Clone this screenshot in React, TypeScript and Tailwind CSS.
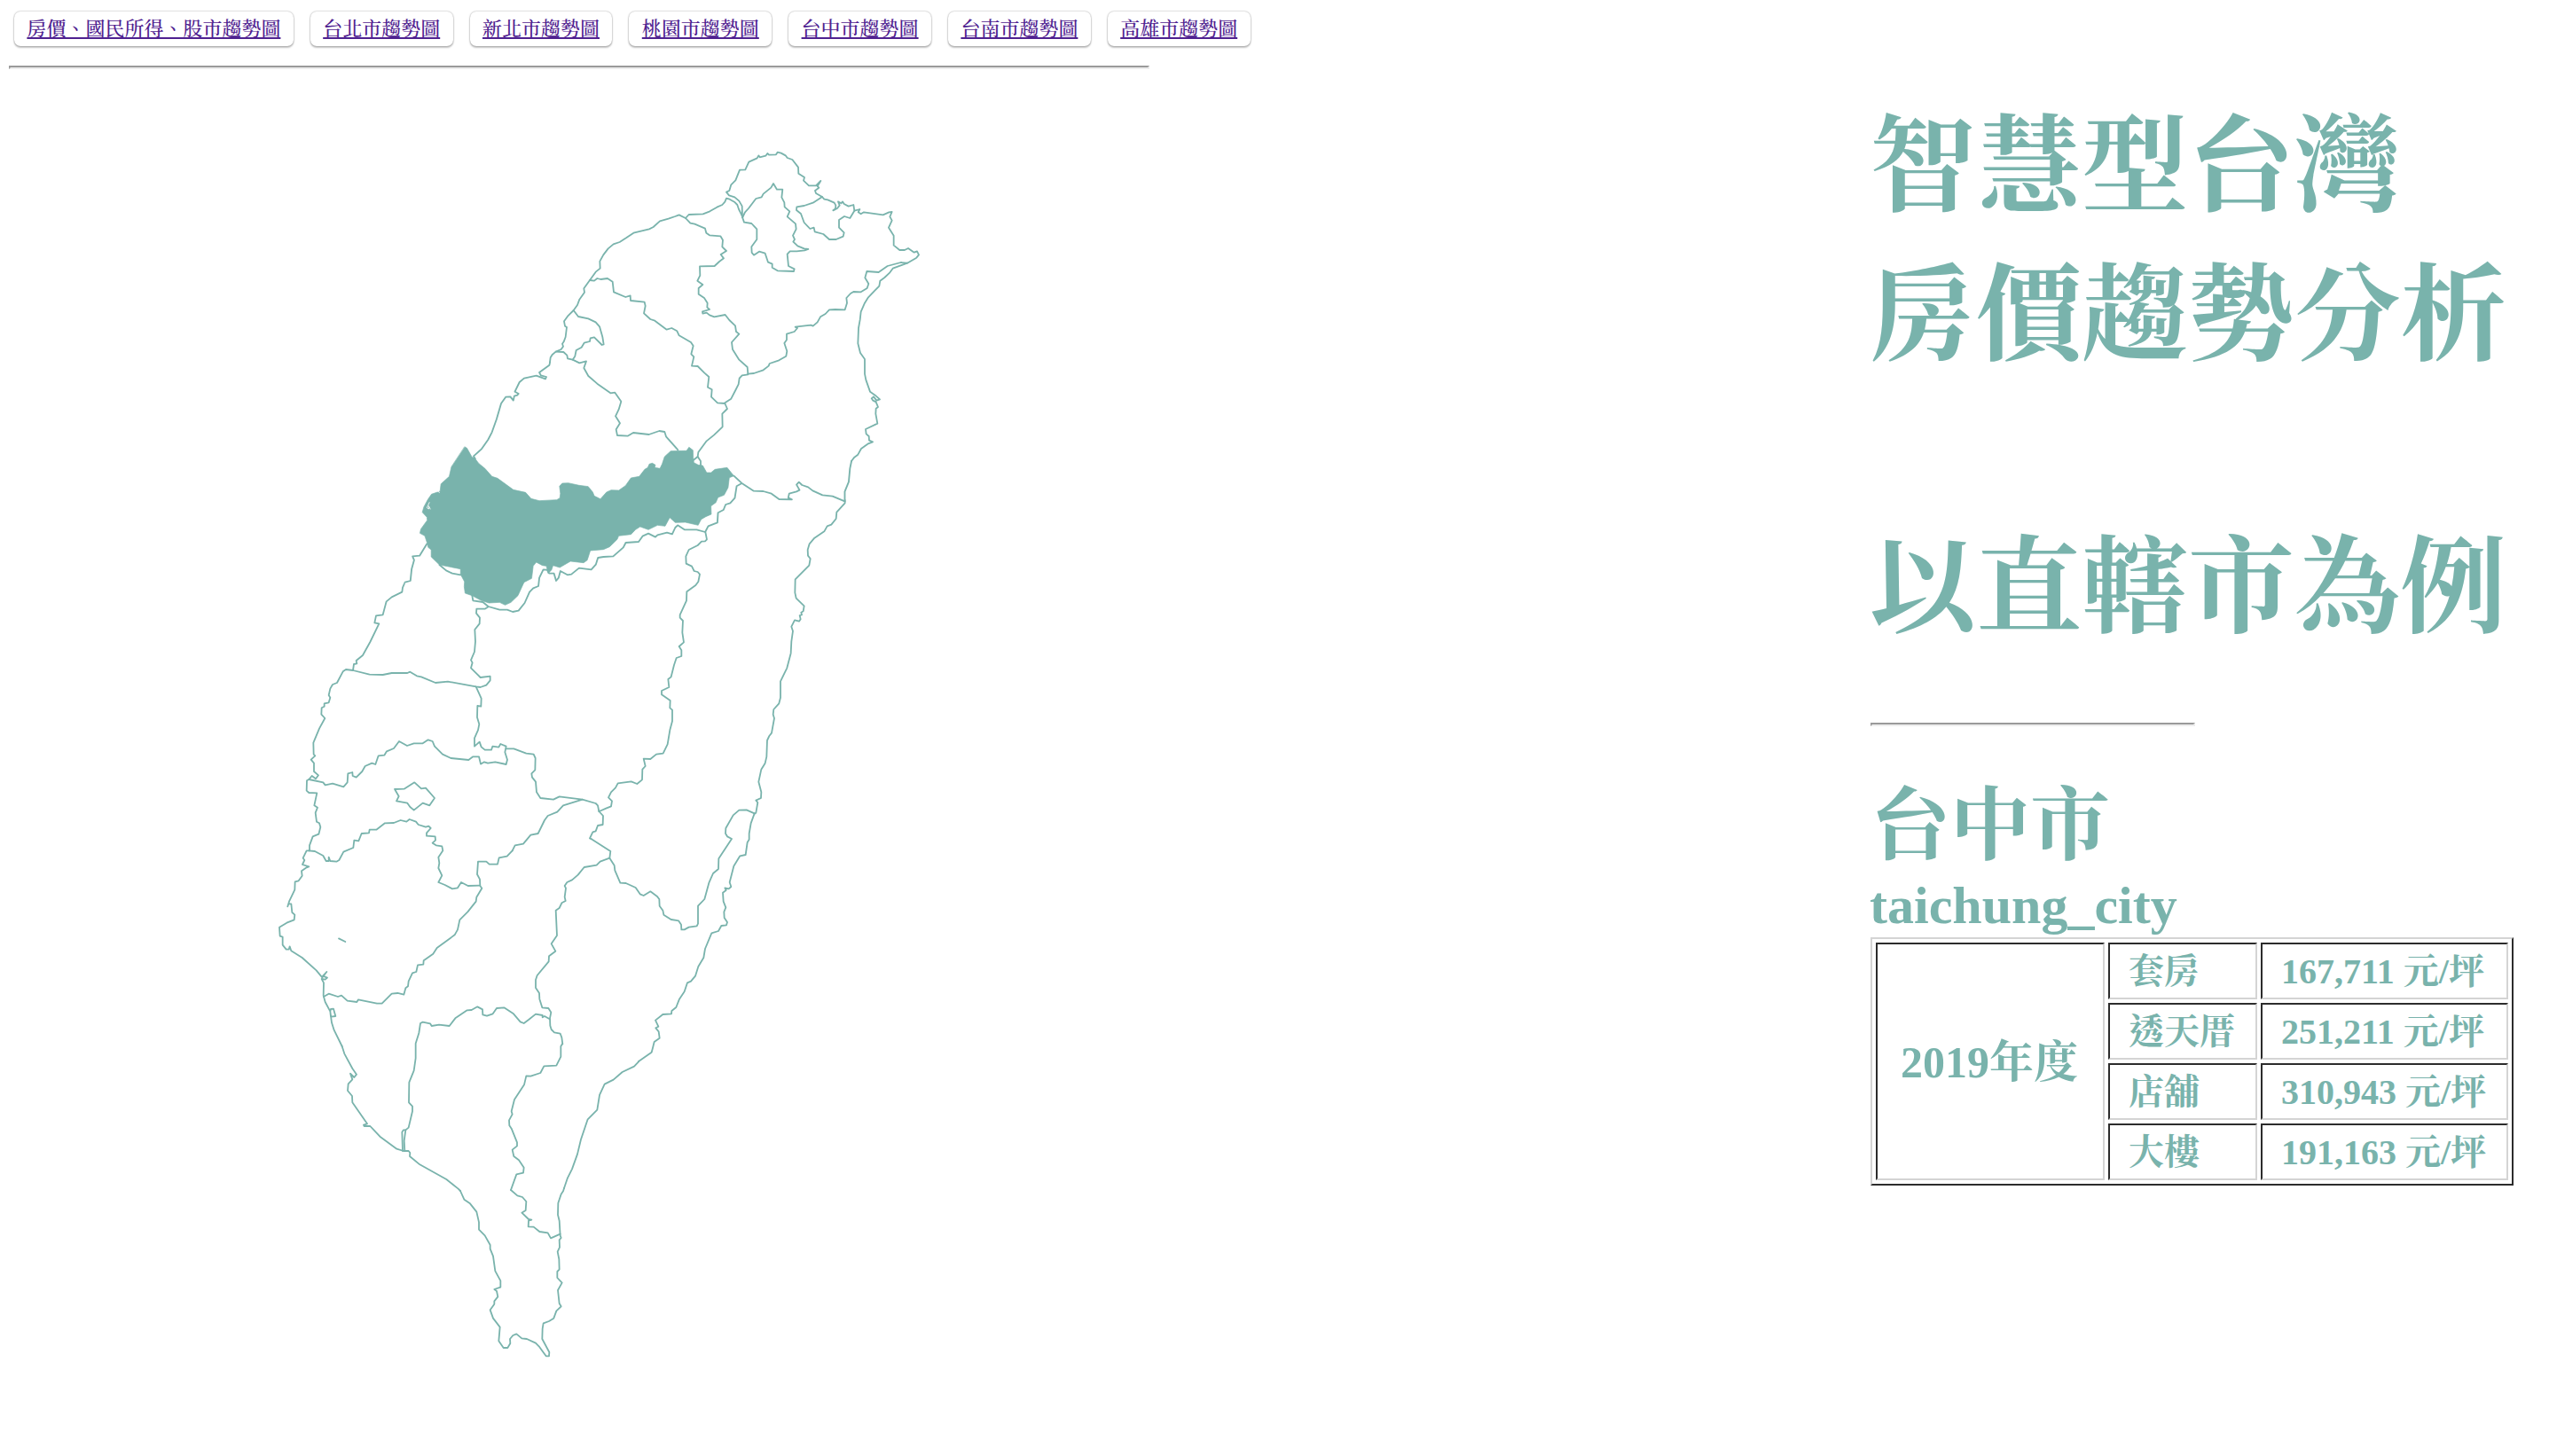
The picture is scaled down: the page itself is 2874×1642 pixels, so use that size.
const navLinks = [
  '房價、國民所得、股市趨勢圖',
  '台北市趨勢圖',
  '新北市趨勢圖',
  '桃園市趨勢圖',
  '台中市趨勢圖',
  '台南市趨勢圖',
  '高雄市趨勢圖',
];

const prices = [
  { type: '套房', price: '167,711 元/坪' },
  { type: '透天厝', price: '251,211 元/坪' },
  { type: '店舖', price: '310,943 元/坪' },
  { type: '大樓', price: '191,163 元/坪' },
];

type Sheet = { transform: string; lines: string[] };

// County boundaries, grouped by map sheet; each sheet has its own origin and scale.
const sheets: Sheet[] = [
  {
    transform: 'translate(620 150) scale(0.33333)',
    lines: [
      '652,285 646,272 639,258 634,243 624,233 608,224 597,221 592,233 583,243 565,251 541,265 518,274 470,276 459,288 437,277 424,282 401,290 372,298 350,318 336,325 283,338 258,355 236,369 215,376 197,391 181,412 169,434 170,458 155,470 135,498 115,526 117,539 100,563 93,582 80,600 60,620 48,637 51,653 57,657 53,690 47,706 42,713 45,722 38,732 20,740 8,750 2,760 0,775',
      '651,285 650,247 640,230 625,217 606,211 597,200 607,195 613,175 628,160 642,125 661,124 673,98 701,85 706,76 710,82 730,77 736,69 741,74 765,73 770,65 782,68 797,76 803,84 820,90 840,116 841,137 861,150 858,161 876,178 900,178 916,162 905,180 910,185 897,195 900,204 921,216 928,224 940,226 962,236 967,245 966,256 958,262 972,255 980,245 975,232 985,238 990,232 995,240 1010,248 1027,243 1030,263 1048,258 1043,268 1052,274 1062,268 1127,277 1147,268 1157,267 1150,283 1157,296 1146,320 1163,347 1163,380 1183,396 1200,396 1212,390 1232,404 1242,400 1248,412 1240,422 1209,440 1160,458 1150,472 1132,489 1117,500 1114,518 1097,535 1077,556 1065,575 1052,605 1049,632 1044,660 1042,712 1050,744 1065,765 1065,815 1069,835 1083,875 1100,887 1116,901 1105,905 1095,892 1088,898 1093,905 1103,910 1110,927 1103,932 1102,950 1108,983 1068,1002 1070,1018 1079,1026 1080,1040 1092,1045 1075,1052 1053,1068 1042,1088 1030,1097 1020,1110',
      '652,285 660,268 672,255 697,222 716,217 722,206 748,185 756,171 768,191 787,191 784,218 793,235 794,250 811,265 803,283 831,307 833,325 822,347 828,360 823,368 838,382 860,391 874,393 862,397 835,400 812,400 803,410 807,450 827,460 825,468 770,466 752,455 752,443 738,437 728,407 708,401 690,413 683,405 682,385 700,360 700,325 682,306 657,302 651,285',
      '921,216 890,236 860,246 835,250 834,261 849,273 860,303 880,324 893,320 896,334 925,342 945,360 968,360 992,350 995,337 978,320 978,294 996,282 1015,288 1030,263',
      '459,288 475,305 490,308 525,323 529,338 540,346 577,349 585,362 583,385 597,399 578,411 588,424 573,435 557,450 507,451 508,482 499,500 517,513 503,525 503,545 522,558 533,575 532,590 540,597 516,604 517,611 530,608 540,616 556,622 593,615 607,633 627,652 630,672 640,680 615,708 618,732 640,767 668,792 670,815',
      '670,815 690,813 722,802 740,788 743,780 775,769 799,755 802,738 793,711 801,700 801,680 827,672 837,660 830,656 883,650 890,653 905,640 915,622 932,612 945,598 965,597 998,598 1005,575 1003,558 1017,543 1027,537 1052,538 1073,525 1078,510 1066,490 1072,468 1112,471 1142,450 1187,438 1209,440',
      '670,817 650,820 641,830 638,850 628,870 613,899 592,913',
      '135,498 150,500 160,492 172,495 195,492 212,503 216,538 256,555 272,550 273,567 320,572 323,585 318,610 340,630 355,635 395,665 412,660 430,670 437,685 477,708 485,720 478,748 487,757 480,788 500,789 523,812 538,825 534,860 548,868 546,893 567,913 592,915',
      '80,600 96,621 130,628 155,640 168,655 178,690 182,715 176,717 150,691 137,694 135,705 116,710 107,725 89,735 85,755 77,767',
      '20,740 46,741 58,752 60,763 77,767 100,778 123,772 115,795 130,822 160,848 205,880 220,878 241,908 233,935 222,958 237,982 224,1003 228,1023 263,1025 282,1014 335,1020 370,1008 388,1011 393,1027 433,1072',
      '592,915 600,933 583,950 584,994 555,1022 530,1042 502,1080 500,1095 485,1107',
      '500,1095 510,1110 510,1124',
    ],
  },
  {
    transform: 'translate(460 400) scale(0.34439 0.33333)',
    lines: [
      '465,25 463,35 430,60 435,70 453,75 450,82 420,71 380,80 365,93 350,125 362,132 358,137 348,140 345,155 335,142 320,143 305,165 290,218 275,262 262,288 240,320 215,343 220,352',
      '103,711 125,730 145,740 172,745',
      '210,815 213,832 245,837 263,852 300,863 325,863 343,870 362,866 382,840 398,803 410,790 427,783 430,755 443,727 455,728 462,740 478,740 485,765 493,755 499,732 522,745 535,743 560,722 600,727 615,710 622,687 640,684 672,682 705,652 713,636 755,633 768,614 787,605 810,617 817,610 848,602 865,607 875,585 883,577 905,592 945,592 973,600 983,580 1013,568 1015,535 1033,525 1040,507 1055,502 1070,485 1076,445 1092,436',
      '1067,410 1092,434 1132,461 1163,462 1190,470 1215,489 1257,490 1245,484 1248,470 1272,463 1282,458 1272,440 1280,431 1290,441 1310,448 1325,460 1357,475 1390,479 1430,496',
      '1452,360 1447,385 1443,430 1430,463 1430,496',
      '62,640 38,680 15,682 20,695 12,725 8,765 -10,770',
    ],
  },
  {
    transform: 'translate(640 520) scale(0.33333)',
    lines: [
      '938,132 938,142 910,173 908,195 892,215 878,220 868,238 835,260 818,280 812,300 813,320 821,330 817,353 770,400 769,445 773,464 800,490 797,508 790,512 792,520 785,522 788,535 783,542 768,538 757,560 762,575 757,610 755,650 742,700 720,745 720,800 715,820 697,840 695,857 699,870 690,920 682,930 675,945 673,1000 668,1022 655,1043 646,1085 655,1120 654,1140 637,1148 643,1155 637,1190 632,1193',
      '466,240 471,265 465,271 453,272 440,285 410,300 400,322 401,347 420,356 428,372 440,375 447,383 442,408 433,420 403,442 402,472 380,520 380,530 390,540 388,580 393,613 377,627 385,640 385,660 368,666 360,690 350,730 340,738 343,765 318,777 318,790 347,810 346,835 354,842 354,880 346,910 338,958 323,989 300,992 280,1008 257,1007 263,1032 253,1043 252,1078 235,1092 215,1084 170,1090 162,1105 147,1120 138,1138 150,1150 147,1168 130,1175 107,1185',
    ],
  },
  {
    transform: 'translate(300 660) scale(0.33333)',
    lines: [
      '468,-6 462,8 460,23 425,40 407,55 395,100 372,103 367,127 382,130 352,192 327,237 305,255 307,265 297,267 294,288 270,285 260,292 240,330 225,336 217,350 212,372 217,380 212,397 197,400 197,410 188,415 187,437 199,450 180,485 160,533 161,572 166,577 152,590 162,602 162,630 177,643 168,655 155,645 145,657 138,661 137,695 145,702 172,703 163,745 174,752 167,770 171,800 180,805 184,818 178,842 158,850 147,880 147,898',
      '294,288 350,302 395,303 425,297 478,297 487,293 510,307 525,310 573,330 615,326 710,343 725,345 745,338 758,322 758,308 725,312 693,280 698,262 693,253 705,225 708,190 706,150 722,130 723,110 711,95 712,80 740,80 752,73',
      '710,343 728,383 727,410 715,408 714,447 721,470 717,490 705,517 705,545 722,530 728,547 740,557 762,557 766,545 787,548 793,537 812,545 808,565 816,590 812,606 775,598 750,602 738,598 726,605 720,580 700,580 685,591 625,585 597,572 570,545 563,528 548,523 530,535 500,535 477,543 450,528 432,552 408,562 400,575 380,577 370,606 358,602 335,612 325,630 305,650 293,645 292,633 277,637 275,667 262,682 225,671 200,676 193,667 145,657',
      '813,553 838,553 880,569 905,572 911,585 910,625 898,637 900,650 912,665 915,700 928,720 972,725 992,715 1070,725 1115,738 1122,745 1126,765',
      '1070,725 1005,745 985,767 953,780 942,795 920,840 895,845 870,875 842,880 833,898',
      '435,690 467,689 502,667 525,688 540,686 570,720 553,745 530,737 500,761 487,750 478,737 441,730 449,714 435,690',
    ],
  },
  {
    transform: 'translate(300 900) scale(0.33333)',
    lines: [
      '145,178 165,180 193,195 203,213 212,213 212,200 217,213 238,215 247,210 262,182 295,168 298,143 313,145 323,120 348,118 350,107 373,107 402,85 432,84 455,75 475,80 485,72 507,80 515,90 540,98 550,95 557,102 543,118 543,128 572,130 573,143 563,152 575,160 595,163 598,178 583,200 586,220 583,237 595,262 583,285 605,294 630,307 648,304 660,285 683,297 722,296',
      '833,178 815,197 788,202 783,224 755,224 745,215 717,215 714,258 723,275 724,297 730,305 712,335 710,350 682,385 655,412 648,445 638,463 578,507 565,527 533,550 532,563 513,565 508,588 495,592 482,620 480,637 472,643 466,665 445,660 425,662 392,695 375,695 312,682 307,690 275,686 255,668 243,672 212,662 195,672',
      '147,178 137,178 125,203 130,210 123,225 145,232 137,235 120,247 122,263 110,280 98,283 97,310 78,350 73,367 76,358 85,358 88,387 97,395 95,412 70,422 45,437 47,467 56,470 56,497 68,512 77,512 80,502 85,517 122,540 170,583 190,607 205,588 192,602 207,608 200,614 188,612 195,625 194,668 200,690 217,722 219,714 228,713 235,738 219,740 217,722 222,760 230,785 257,840',
      '246,475 268,486',
    ],
  },
  {
    transform: 'translate(600 860) scale(0.33333)',
    lines: [
      '226,165 240,180 239,210 222,213 215,232 205,235 195,256 203,260 265,300 262,323 278,348 280,365 298,407 317,408 350,423 365,445 377,450 400,436 422,452 430,462 431,485 442,500 445,515 470,531 495,535 504,548 505,565 515,565 530,557 557,553 561,545 561,485 583,462 598,407 612,375 630,360 631,325 675,258 660,250 654,240 655,222 680,178 700,161 725,160 752,172',
      '262,323 230,335 218,347 176,354 155,380 135,397 118,405 110,417 114,425 110,455 113,468 100,475 92,492 80,500 84,585 65,613 79,638 57,655 56,673 17,720 12,735 12,762 24,780 25,800 34,829 55,831 64,845 60,865 61,890 65,903 75,913 95,917 100,930 103,952',
      '752,172 740,205 734,240 734,260 728,270 722,312 703,316 682,350 668,405 673,420 665,427 652,424 656,432 645,440 647,470 655,490 649,505 650,525 660,540 657,550 640,552 630,570 607,577 585,630 580,660 562,690 552,722 537,740 525,745 515,775 498,800 487,828 472,840 471,850 442,852 417,872 427,893 418,898 428,910 431,932 413,945 408,965 404,980 360,1011',
    ],
  },
  {
    transform: 'translate(340 1100) scale(0.33333)',
    lines: [
      '137,240 145,265 172,315 186,335 178,345 165,332 172,352 158,367 156,390 171,408 172,430 222,502 210,506 212,510 232,510 265,545 322,587 345,594 362,594 367,600 366,612 400,640 490,690 530,722 537,729',
      '342,594 340,530 345,523 352,523 362,515 375,460 375,443 363,430 364,362 380,322 386,280 386,230 397,195 402,162 410,158 435,163 440,171 465,167 500,171 520,145 560,118 575,117 595,106 612,115 613,133 627,137 647,130 660,111 685,109 717,130 740,157 752,162 768,150 792,131 815,135 815,142 822,138 838,147',
      '349,594 347,560 352,523',
      '1140,292 1125,308 1085,327 1055,353 1025,368 1008,405 1000,455 968,487 945,555 933,605 915,655 900,685 888,720',
      '882,232 877,240 877,275 862,305 820,307 808,330 775,341 760,340 753,370 720,420 710,460 713,470 702,490 703,508 710,518 729,565 729,577 713,590 718,612 735,625 752,650 750,668 727,673 708,726',
    ],
  },
  {
    transform: 'translate(520 1260) scale(0.33333)',
    lines: [
      '348,240 345,250 338,260 328,290 327,330 332,350 335,400 338,408 332,415 333,440 326,455 331,480 332,515 325,522 325,543 341,560 327,585 332,630 338,640 322,655 313,680 297,690 278,697 275,715 274,750 298,795 297,808 287,808 263,775 252,764 222,750 205,748 187,733 175,738 165,750 166,765 157,780 143,780 127,757 131,710 108,680 98,652 112,632 112,622 124,607 120,588 112,582 133,575 133,553 115,520 108,470 98,445 98,432 80,400 60,380 60,355 52,320 30,292 10,278 -3,249',
      '168,246 190,265 207,270 220,285 218,315 205,323 228,345 238,347 228,350 227,370 245,371 265,387 293,391 303,409 335,395',
    ],
  },
];

const taichung =
  '186,312 193,316 210,347 217,348 232,368 252,385 275,412 293,418 345,457 385,466 403,487 430,494 487,491 497,485 499,470 496,445 505,435 525,434 560,442 590,446 605,465 610,478 630,488 650,465 665,458 690,459 712,443 730,417 757,412 775,388 785,382 790,370 800,367 810,373 808,382 825,385 832,370 840,345 860,326 912,325 920,313 933,323 934,350 936,365 950,373 965,375 978,399 992,399 1005,388 1045,382 1067,410 1052,416 1048,450 1035,475 1015,483 1008,500 992,512 993,540 975,548 960,557 950,577 908,567 875,568 857,551 842,580 817,577 787,592 760,582 745,592 730,608 690,613 685,625 660,650 640,659 597,663 587,695 575,704 532,699 497,720 475,713 470,728 459,740 453,715 440,713 420,702 410,715 405,757 380,770 360,815 337,838 318,847 300,838 265,840 240,832 210,815 187,807 184,785 185,768 172,743 172,725 103,711 76,684 76,660 66,652 62,635 55,613 39,604 42,590 63,560 62,550 47,533 52,515 65,490 77,472 105,462 108,437 135,412 142,380';

function TaiwanMap() {
  return (
    <svg
      className="block h-[1560px] w-[1286px] shrink-0 overflow-visible"
      viewBox="10 78 1286 1560"
      fill="none"
      stroke="#79b3ac"
      strokeWidth="5.4"
      strokeLinejoin="round"
      strokeLinecap="round"
    >
      {sheets.map((sheet) => (
        <g key={sheet.transform} transform={sheet.transform}>
          {sheet.lines.map((points) => (
            <polyline key={points} points={points} />
          ))}
        </g>
      ))}
      <g transform="translate(460 400) scale(0.34439 0.33333)">
        <polygon points={taichung} fill="#79b3ac" strokeWidth="2" />
        <g stroke="#fff" strokeWidth="2.5">
          <polyline points="96,461 103,466" />
          <polyline points="70,500 62,518 68,522 68,512 73,522" />
        </g>
      </g>
    </svg>
  );
}

function Rule({ className }: { className: string }) {
  return (
    <hr
      className={`h-1 border-2 border-t-[#9a9a9a] border-r-[#ededed] border-b-[#ededed] border-l-[#9a9a9a] ${className}`}
    />
  );
}

const cell =
  'border-2 border-t-[#2c2c2c] border-r-[#d4d4d4] border-b-[#d4d4d4] border-l-[#2c2c2c] p-0 text-left whitespace-nowrap';

export default function App() {
  return (
    <div className="h-[1642px] w-[2874px] overflow-hidden bg-white font-['Liberation_Serif','Noto_Serif_CJK_TC','Noto_Sans_CJK_TC',serif]">
      <nav className="flex gap-[19px] pt-[13px] pl-4">
        {navLinks.map((label) => (
          <a
            key={label}
            href="#"
            className="flex h-[39px] items-center rounded-[7px] px-[14.4px] pt-px text-[22px] leading-[22px] font-medium whitespace-nowrap text-[#4f2190] underline decoration-2 underline-offset-[2px] shadow-[0_0_2px_rgba(0,0,0,0.4),0_2px_2px_rgba(0,0,0,0.22)]"
          >
            {label}
          </a>
        ))}
      </nav>
      <main className="flex">
        <section className="ml-[10px] w-[1286px] shrink-0 pt-[22px]">
          <Rule className="w-full" />
          <TaiwanMap />
        </section>
        <section className="ml-[813px] w-[725px] shrink-0 pt-[53px] text-[#79b3ac]">
          <h1 className="-ml-px text-[119.7px] leading-[168px] font-bold whitespace-nowrap">
            智慧型台灣
            <br />
            房價趨勢分析
          </h1>
          <h1 className="mt-[139px] -ml-px text-[119.7px] leading-[168px] font-bold whitespace-nowrap">
            以直轄市為例
          </h1>
          <Rule className="mt-[67px] w-[366px]" />
          <h2 className="mt-[63px] text-[90px] leading-[100px] font-bold">台中市</h2>
          <h3 className="mt-[5px] -ml-px text-[60px] leading-[68px] font-bold">taichung_city</h3>
          <table className="mt-[2px] w-[725px] table-fixed border-separate border-spacing-1 border-2 border-t-[#d4d4d4] border-r-[#2c2c2c] border-b-[#2c2c2c] border-l-[#d4d4d4] font-bold">
            <colgroup>
              <col className="w-[258px]" />
              <col className="w-[168px]" />
              <col className="w-[279px]" />
            </colgroup>
            <tbody>
              {prices.map((row, i) => (
                <tr key={row.type} className="h-16 text-[40px] leading-[58px]">
                  {i === 0 && (
                    <td rowSpan={4} className={`${cell} pt-[2px] pl-[26px] text-[50px]`}>
                      2019年度
                    </td>
                  )}
                  <td className={`${cell} pt-[2px] pl-[21px]`}>{row.type}</td>
                  <td className={`${cell} pt-[2px] pl-[21px]`}>{row.price}</td>
                </tr>
              ))}
            </tbody>
          </table>
        </section>
      </main>
    </div>
  );
}
